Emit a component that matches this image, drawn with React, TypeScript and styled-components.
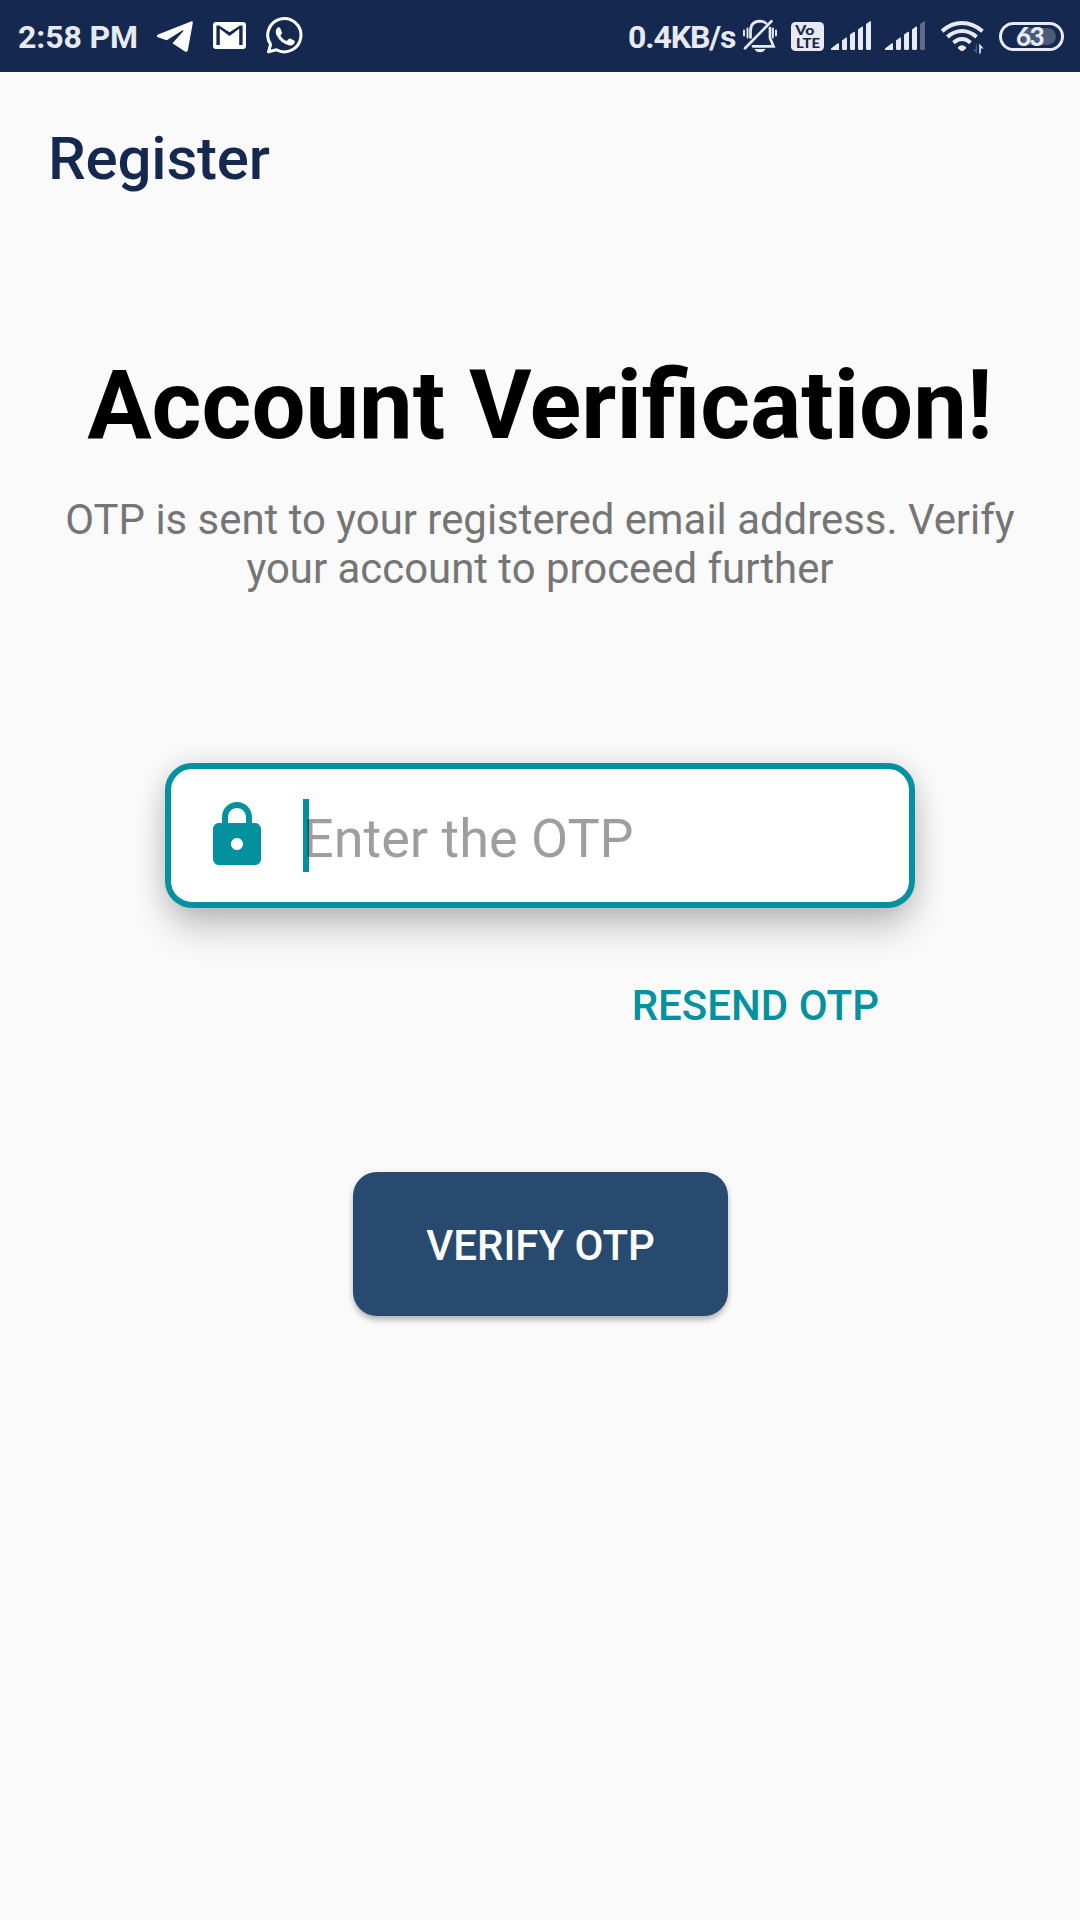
import React from "react";
import styled, { createGlobalStyle } from "styled-components";

const TEAL = "#03919e";
const NAVY = "#15284f";
const STATUS = "#e7eaf2";

const GlobalStyle = createGlobalStyle`
  * { box-sizing: border-box; }
  html, body { margin: 0; padding: 0; background: #fafafa; }
  body { font-family: Roboto, "Noto Sans", sans-serif; }
`;

const Screen = styled.div`
  width: 1080px;
  height: 1920px;
  display: flex;
  flex-direction: column;
  background: #fafafa;
  overflow: hidden;
`;

const StatusBar = styled.header`
  flex: none;
  height: 72px;
  padding: 0 16px 0 18px;
  display: flex;
  align-items: center;
  justify-content: space-between;
  background: ${NAVY};
  color: ${STATUS};
`;

const StatusGroup = styled.div`
  display: flex;
  align-items: center;
  height: 72px;
`;

const StatusText = styled.span<{ $width: number; $tracking: number }>`
  width: ${(p) => p.$width}px;
  padding-top: 1px;
  font-size: 32px;
  line-height: 50px;
  font-weight: 700;
  letter-spacing: ${(p) => p.$tracking}px;
  white-space: nowrap;
`;

const Glyph = styled.svg<{ $gap: number }>`
  display: block;
  flex: none;
  height: 72px;
  margin-left: ${(p) => p.$gap}px;
`;

const Battery = styled.div`
  width: 65px;
  height: 29px;
  margin: 0 0 0 15px;
  padding: 0 5px;
  display: grid;
  grid-template-rows: 23px;
  align-items: center;
  border: 3px solid ${STATUS};
  border-radius: 15px;
`;

const BatteryLevel = styled.div`
  grid-area: 1 / 1;
  justify-self: end;
  width: 34px;
  height: 17px;
  border-radius: 0 9px 9px 0;
  background: #4c5a7a;
`;

const BatteryText = styled.span`
  grid-area: 1 / 1;
  justify-self: center;
  margin-right: 4px;
  font: 900 26px/22px Lato, sans-serif;
  letter-spacing: -1.5px;
`;

const AppBar = styled.h1`
  margin: 0;
  padding: 52px 48px 0;
  font-size: 60px;
  line-height: 70px;
  font-weight: 500;
  letter-spacing: -0.2px;
  color: ${NAVY};
`;

const Content = styled.main`
  padding-top: 155px;
  display: flex;
  flex-direction: column;
  align-items: center;
`;

const Title = styled.h2`
  margin: 0;
  font-size: 95.8px;
  line-height: 112px;
  font-weight: 700;
  color: #000;
  white-space: nowrap;
`;

const Subtitle = styled.p`
  width: 984px;
  margin: 34px 0 0;
  font-size: 41.9px;
  line-height: 49px;
  text-align: center;
  color: #757575;
`;

const OtpField = styled.label`
  width: 750px;
  height: 145px;
  margin-top: 170px;
  padding-left: 30px;
  display: flex;
  align-items: center;
  border: 6px solid ${TEAL};
  border-radius: 27px;
  background: #fff;
  box-shadow: 0 25px 38px -4px rgba(0, 0, 0, 0.2), 0 2px 28px rgba(0, 0, 0, 0.15);
`;

const Caret = styled.span`
  width: 6px;
  height: 73px;
  margin-left: 30px;
  background: ${TEAL};
`;

const Hint = styled.span`
  margin-left: -6px;
  padding-top: 6px;
  font-size: 54px;
  line-height: 64px;
  color: rgba(0, 0, 0, 0.38);
  z-index: 1;
`;

const ResendButton = styled.button`
  align-self: flex-end;
  margin: 73px 201px 0 0;
  padding: 0;
  border: 0;
  background: none;
  font: 500 42px/50px Roboto, sans-serif;
  color: ${TEAL};
`;

const VerifyButton = styled.button`
  width: 375px;
  height: 144px;
  margin: 141px 0 0 1px;
  padding: 3px 0 0;
  border: 0;
  border-radius: 24px;
  background: #274a6e;
  color: #fff;
  font: 500 42px/50px Roboto, sans-serif;
  box-shadow: 0 5px 6px -1px rgba(0, 0, 0, 0.24), 0 1px 7px rgba(0, 0, 0, 0.1);
`;

const TelegramIcon = () => (
  <Glyph $gap={17} width={38} viewBox="156 0 38 72">
    <path
      d="M158 34.5 191 21.4q2-.6 1.8 1.500l-5 27.300q-.7 2.400-3.200 1L172.500 43.300 183.200 31.200q.5-1.400-1-.700L166.700 40.200 158 37.200q-2.400-1.200 0-2.700Z"
      fill="#fff"
    />
  </Glyph>
);

const MailIcon = () => (
  <Glyph $gap={19} width={33} viewBox="213 0 33 72">
    <path
      fillRule="evenodd"
      fill="#fff"
      d="M216 22h27q3 0 3 3v21q0 3-3 3h-27q-3 0-3-3V25q0-3 3-3Zm.4 3.500V45h3.400V28.700l9.700 7.300 9.700-7.300V45h3.400V25.500h-2.600l-10.500 6.700-10.500-6.700Z"
    />
  </Glyph>
);

const WhatsAppIcon = () => (
  <Glyph $gap={20} width={38} viewBox="265.7 0 38 72">
    <path
      d="M270.300 44.500a16.600 16.600 0 1 1 5.700 5.200L268.200 51.900Z"
      fill="none"
      stroke="#fff"
      strokeWidth={3}
      strokeLinejoin="round"
    />
    <path
      d="M277.200 27.400q1.900-.7 2.800.8l1.700 4.200q.2 1-1.600 3.100 2.400 4.300 6.400 5.600l2.200-2.300q.7-.6 1.600-.1l3.600 1.900q1 .6.300 2.300-1.500 3-5 2.500-8.600-1.500-13.100-10.300-1.700-4.500 1.100-7.700Z"
      fill="#fff"
    />
  </Glyph>
);

const SilentIcon = () => (
  <Glyph $gap={7} width={36} viewBox="742 0 36 72">
    <g fill="none" stroke={STATUS} strokeWidth={2.700} strokeLinecap="round">
      <path d="M750.500 37.500V31q0-9.500 9.500-9.800 3.500 0 6 2" />
      <path d="M770 28v10l3.500 8.300H753" />
      <path d="M771.500 21.300 745 48.200" />
      <path d="M744 30.500v5M747.500 28.500v9M776 30.500v5M772.900 28.500v9" strokeWidth={1.900} />
    </g>
    <path d="M754.500 49h11q-1.500 3.200-5.500 3.200t-5.500-3.200Z" fill={STATUS} />
  </Glyph>
);

const VolteIcon = () => (
  <Glyph $gap={13} width={33} viewBox="791 0 33 72">
    <rect x={791} y={22} width={33} height={29} rx={4.500} fill={STATUS} />
    <g fill={NAVY} fontFamily="Lato, sans-serif" fontWeight={900}>
      <text x={795.300} y={34.500} fontSize={12.500} textLength={19} lengthAdjust="spacingAndGlyphs">Vo</text>
      <text x={796} y={47.500} fontSize={13} textLength={24} lengthAdjust="spacingAndGlyphs">LTE</text>
    </g>
  </Glyph>
);

const SIGNAL_BARS = [
  "M0 50V48.500L6.500 43.500Q8 42.800 8 44V50Z",
  "M11 49V40.500L15 37.500Q16 37 16 38.500V49L15 50H12Z",
  "M19 49V34.500L23 31.800Q24 31.500 24 32.500V49L23 50H20Z",
  "M27 49V29.500L31 26.500Q32 26 32 27.500V49L31 50H28Z",
  "M35 49V24L39 21.300Q40 21 40 22V49L39 50H36Z",
];

const SignalIcon = ({ gap, level }: { gap: number; level: number }) => (
  <Glyph $gap={gap} width={41} viewBox="0 0 41 72">
    {SIGNAL_BARS.map((d, i) => (
      <path key={d} d={d} fill={i < level ? STATUS : "#5f6c89"} />
    ))}
  </Glyph>
);

const WifiIcon = () => (
  <Glyph $gap={15} width={43} viewBox="941 0 43 72">
    <g fill="none" stroke={STATUS} strokeWidth={4}>
      <path d="M942 31.200Q951 23 962 23T982.500 31.200" />
      <path d="M947.500 37Q954 31 962 31T976.500 37" />
      <path d="M953.500 42.700Q957.500 39 962 39T970.500 42.700" />
    </g>
    <path d="M958 47q4-3.500 8 0v1.500L963 51h-2l-3-2.500Z" fill={STATUS} />
    <path d="M977 43.700V53.500L973 49.500h2.800V43.700Z" fill="#4c5a7a" />
    <path d="M979.200 53.500V43.500L983.500 48.500h-2.700v5Z" fill={STATUS} />
  </Glyph>
);

const LockIcon = () => (
  <svg width={72} height={72} viewBox="0 0.333 24 24" fill={TEAL}>
    <path d="M18 8h-1V6c0-2.760-2.240-5-5-5S7 3.240 7 6v2H6c-1.100 0-2 .9-2 2v10c0 1.100.9 2 2 2h12c1.100 0 2-.9 2-2V10c0-1.100-.9-2-2-2zm-6 9c-1.100 0-2-.9-2-2s.9-2 2-2 2 .9 2 2-.9 2-2 2zm3-9H9V6c0-1.660 1.340-3 3-3s3 1.340 3 3v2z" />
  </svg>
);

export default function App() {
  return (
    <Screen>
      <GlobalStyle />
      <StatusBar>
        <StatusGroup>
          <StatusText $width={121} $tracking={-0.1}>2:58 PM</StatusText>
          <TelegramIcon />
          <MailIcon />
          <WhatsAppIcon />
        </StatusGroup>
        <StatusGroup>
          <StatusText $width={107} $tracking={-1.1}>0.4KB/s</StatusText>
          <SilentIcon />
          <VolteIcon />
          <SignalIcon gap={7} level={5} />
          <SignalIcon gap={13} level={4} />
          <WifiIcon />
          <Battery>
            <BatteryLevel />
            <BatteryText>63</BatteryText>
          </Battery>
        </StatusGroup>
      </StatusBar>
      <AppBar>Register</AppBar>
      <Content>
        <Title>Account Verification!</Title>
        <Subtitle>OTP is sent to your registered email address. Verify your account to proceed further</Subtitle>
        <OtpField>
          <LockIcon />
          <Caret />
          <Hint>Enter the OTP</Hint>
        </OtpField>
        <ResendButton>RESEND OTP</ResendButton>
        <VerifyButton>VERIFY OTP</VerifyButton>
      </Content>
    </Screen>
  );
}
